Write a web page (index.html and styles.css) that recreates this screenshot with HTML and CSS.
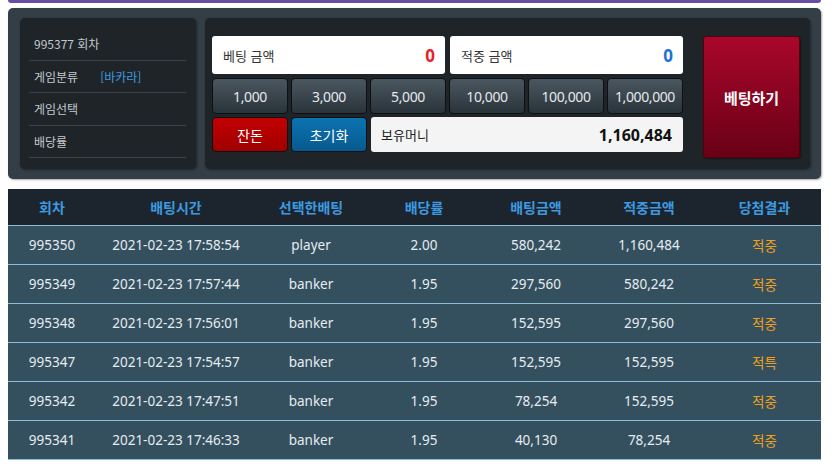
FILE: index.html
```html
<!DOCTYPE html>
<html lang="ko">
<head>
<meta charset="utf-8">
<link rel="stylesheet" href="styles.css">
</head>
<body>
<div class="top-bar"></div>
<div class="panel">
  <div class="info">
    <div class="info-row">995377 회차</div>
    <div class="info-row">게임분류 <span class="game-type">[바카라]</span></div>
    <div class="info-row">게임선택</div>
    <div class="info-row">배당률</div>
  </div>
  <div class="bet-box">
    <div class="bet-main">
      <div class="amount-row">
        <div class="amount"><span>베팅 금액</span><b class="red">0</b></div>
        <div class="amount"><span>적중 금액</span><b class="blue">0</b></div>
      </div>
      <div class="chip-row">
        <button class="chip">1,000</button>
        <button class="chip">3,000</button>
        <button class="chip">5,000</button>
        <button class="chip">10,000</button>
        <button class="chip">100,000</button>
        <button class="chip">1,000,000</button>
      </div>
      <div class="action-row">
        <button class="act change">잔돈</button>
        <button class="act reset">초기화</button>
        <div class="money"><span>보유머니</span><b>1,160,484</b></div>
      </div>
    </div>
    <button class="bet-btn">베팅하기</button>
  </div>
</div>
<table class="history">
  <colgroup>
    <col class="c1"><col class="c2"><col class="c3"><col class="c4"><col class="c5"><col class="c6"><col class="c7">
  </colgroup>
  <thead>
    <tr><th>회차</th><th>배팅시간</th><th>선택한배팅</th><th>배당률</th><th>배팅금액</th><th>적중금액</th><th>당첨결과</th></tr>
  </thead>
  <tbody>
    <tr><td>995350</td><td>2021-02-23 17:58:54</td><td>player</td><td>2.00</td><td>580,242</td><td>1,160,484</td><td class="res">적중</td></tr>
    <tr><td>995349</td><td>2021-02-23 17:57:44</td><td>banker</td><td>1.95</td><td>297,560</td><td>580,242</td><td class="res">적중</td></tr>
    <tr><td>995348</td><td>2021-02-23 17:56:01</td><td>banker</td><td>1.95</td><td>152,595</td><td>297,560</td><td class="res">적중</td></tr>
    <tr><td>995347</td><td>2021-02-23 17:54:57</td><td>banker</td><td>1.95</td><td>152,595</td><td>152,595</td><td class="res">적특</td></tr>
    <tr><td>995342</td><td>2021-02-23 17:47:51</td><td>banker</td><td>1.95</td><td>78,254</td><td>152,595</td><td class="res">적중</td></tr>
    <tr><td>995341</td><td>2021-02-23 17:46:33</td><td>banker</td><td>1.95</td><td>40,130</td><td>78,254</td><td class="res">적중</td></tr>
  </tbody>
</table>
</body>
</html>
```
FILE: styles.css
```css
* { box-sizing: border-box; }
body {
  margin: 0;
  background: #fff;
  font-family: "Noto Sans", "Noto Sans CJK KR", sans-serif;
  width: 835px;
  height: 470px;
  overflow: hidden;
}
.top-bar {
  margin-left: 8px;
  width: 813px;
  height: 3px;
  background: #6650a6;
  border-radius: 0 0 4px 4px;
}
.panel {
  margin: 5px 0 0 8px;
  width: 813px;
  height: 171px;
  background: #333e46;
  border-radius: 5px;
  padding: 10px 11px 10px 12px;
  display: flex;
  gap: 9px;
  box-shadow: 1px 1px 2px rgba(0,0,0,0.35);
}
.info {
  width: 176px;
  background: #1e2428;
  border-radius: 5px;
  padding: 10px 10px 0 9px;
  box-shadow: 1px 1px 3px rgba(0,0,0,0.4);
}
.info-row {
  height: 32.5px;
  border-bottom: 1px solid #3b4248;
  padding-left: 5px;
  display: flex;
  align-items: center;
  font-family: "Noto Sans CJK KR", sans-serif;
  font-size: 12px;
  color: #c4c9cd;
}
.game-type {
  color: #3f9be0;
  margin-left: 22px;
}
.bet-box {
  flex: 1;
  background: #1e2428;
  border-radius: 5px;
  padding: 18px 10px 0 7px;
  display: flex;
  gap: 20px;
  box-shadow: 1px 1px 3px rgba(0,0,0,0.4);
}
.bet-main {
  width: 471px;
  display: flex;
  flex-direction: column;
  gap: 4px;
}
.amount-row {
  display: flex;
  gap: 5px;
}
.amount {
  flex: 1;
  height: 38px;
  background: #fff;
  border-radius: 3px;
  display: flex;
  align-items: center;
  justify-content: space-between;
  padding: 0 10px 0 11px;
  font-family: "Noto Sans CJK KR", sans-serif;
  font-size: 13px;
  color: #333;
}
.amount b { font-size: 17px; font-family: "Noto Sans", sans-serif; }
.red { color: #e8202c; }
.blue { color: #1a72dc; }
.chip-row, .action-row {
  display: flex;
  gap: 3px;
}
.chip, .act {
  width: 76px;
  height: 36px;
  border: 1px solid #0e1113;
  border-radius: 4px;
  font-family: "Noto Sans", "Noto Sans CJK KR", sans-serif;
  font-size: 14px;
  color: #e4e8ec;
  padding: 0;
  letter-spacing: -0.4px;
}
.chip {
  background: linear-gradient(#4b5760, #29333a);
}
.action-row { margin-top: -1px; }
.act {
  height: 35px;
  font-family: "Noto Sans CJK KR", sans-serif;
  font-size: 14px;
  color: #fff;
  letter-spacing: 0;
}
.change { background: linear-gradient(#c20000, #a00000); }
.reset { background: linear-gradient(#0b73b2, #075a8e); }
.money {
  flex: 1;
  margin-left: 1px;
  height: 35px;
  background: #f4f4f4;
  border-radius: 3px;
  display: flex;
  align-items: center;
  justify-content: space-between;
  padding: 0 11px 0 10px;
  font-family: "Noto Sans CJK KR", sans-serif;
  font-size: 13px;
  color: #222;
}
.money b { font-size: 16px; font-family: "Noto Sans", sans-serif; color: #111; }
.bet-btn {
  width: 97px;
  height: 122px;
  background: linear-gradient(#a9072b, #690016);
  border: 1px solid #55000f;
  border-radius: 3px;
  color: #fff;
  font-family: "Noto Sans CJK KR", sans-serif;
  font-size: 15px;
  font-weight: bold;
  padding: 0;
  box-shadow: 1px 1px 2px rgba(0,0,0,0.4);
}
.history {
  margin: 10px 0 0 8px;
  width: 813px;
  table-layout: fixed;
  border-collapse: collapse;
}
.c1 { width: 88px; }
.c2 { width: 160px; }
.c3 { width: 110px; }
.c4 { width: 116px; }
.c5 { width: 108px; }
.c6 { width: 118px; }
.c7 { width: 113px; }
.history th {
  height: 36px;
  background: #1c252d;
  color: #3d9ae0;
  font-family: "Noto Sans CJK KR", sans-serif;
  font-size: 14px;
  font-weight: bold;
  padding: 0;
}
.history td {
  height: 39px;
  background: #34505f;
  border-top: 1px solid #8dbfdc;
  color: #e6ecf0;
  font-size: 13.5px;
  text-align: center;
  padding: 0;
}
.history tbody tr:last-child td { border-bottom: 1px solid #8dbfdc; }
.history td.res {
  color: #f0a01c;
  font-family: "Noto Sans CJK KR", sans-serif;
}
```
